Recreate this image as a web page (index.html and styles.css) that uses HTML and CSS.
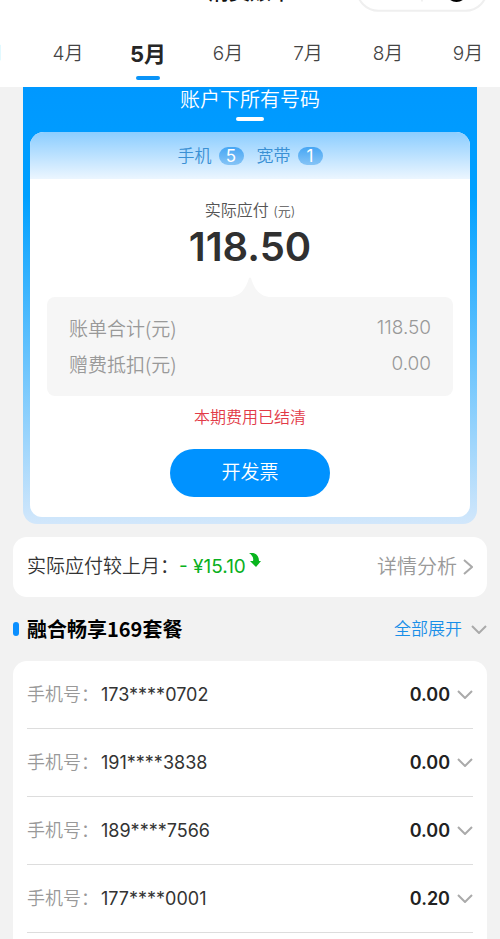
FILE: index.html
```html
<!DOCTYPE html>
<html lang="zh-CN">
<head>
<meta charset="utf-8">
<meta name="viewport" content="width=device-width, initial-scale=1">
<title>消费账单</title>
<link rel="stylesheet" href="styles.css">
</head>
<body>
<header class="top">
  <div class="titlebar">
    <h1 class="page-title">消费账单</h1>
    <div class="capsule">
      <svg viewBox="0 0 130 44" aria-hidden="true">
        <rect x="1" y="1" width="128" height="42" rx="21" fill="#fff" stroke="#efefef" stroke-width="2"/>
        <path d="M65 12V34" stroke="#e2e2e2" stroke-width="1"/>
        <circle cx="99" cy="24" r="9" fill="none" stroke="#000" stroke-width="3"/>
        <circle cx="99" cy="24" r="4" fill="#000"/>
      </svg>
    </div>
  </div>
  <nav class="months">
    <a href="#m3">3月</a>
    <a href="#m4">4月</a>
    <a href="#m5" class="active">5月</a>
    <a href="#m6">6月</a>
    <a href="#m7">7月</a>
    <a href="#m8">8月</a>
    <a href="#m9">9月</a>
  </nav>
</header>
<main>
  <section class="account">
    <h2 class="account-tab">账户下所有号码</h2>
    <div class="bill">
      <div class="counts">
        <span>手机</span><span class="count">5</span>
        <span>宽带</span><span class="count">1</span>
      </div>
      <p class="due-label">实际应付 <small>(元)</small></p>
      <p class="due">118.50</p>
      <svg class="peak" viewBox="0 0 44 20" aria-hidden="true"><path d="M0 20C12 20 18 12 21 1Q22 0 23 1C26 12 32 20 44 20Z" fill="#f6f6f6"/></svg>
      <dl class="summary">
        <div><dt>账单合计(元)</dt><dd>118.50</dd></div>
        <div><dt>赠费抵扣(元)</dt><dd>0.00</dd></div>
      </dl>
      <p class="settled">本期费用已结清</p>
      <button class="invoice" type="button">开发票</button>
    </div>
  </section>
  <section class="compare">
    <span class="compare-label">实际应付较上月：</span>
    <span class="delta">- ¥15.10</span>
    <svg class="drop" viewBox="0 0 12 14" aria-hidden="true"><path d="M0 0C6 -1 10 2 10 8H12L7 14L1 8H4C5 5 3 2 0 0Z" fill="#09b51e"/></svg>
    <a class="detail" href="#analysis">详情分析
      <svg class="right" viewBox="0 0 10 16" aria-hidden="true"><path d="M1 1L9 8L1 15"/></svg>
    </a>
  </section>
  <section>
    <div class="plan">
      <h2>融合畅享169套餐</h2>
      <button type="button">全部展开 <svg class="down" viewBox="0 0 16 9" aria-hidden="true"><path d="M1 1L8 8L15 1"/></svg></button>
    </div>
    <ul class="numbers">
      <li><span class="key">手机号：</span><span>173****0702</span><button type="button" aria-label="展开">0.00 <svg class="down" viewBox="0 0 16 9"><path d="M1 1L8 8L15 1"/></svg></button></li>
      <li><span class="key">手机号：</span><span>191****3838</span><button type="button" aria-label="展开">0.00 <svg class="down" viewBox="0 0 16 9"><path d="M1 1L8 8L15 1"/></svg></button></li>
      <li><span class="key">手机号：</span><span>189****7566</span><button type="button" aria-label="展开">0.00 <svg class="down" viewBox="0 0 16 9"><path d="M1 1L8 8L15 1"/></svg></button></li>
      <li><span class="key">手机号：</span><span>177****0001</span><button type="button" aria-label="展开">0.20 <svg class="down" viewBox="0 0 16 9"><path d="M1 1L8 8L15 1"/></svg></button></li>
    </ul>
  </section>
</main>
</body>
</html>
```
FILE: styles.css
```css
* { box-sizing: border-box; }
html { background: #f2f2f2; }
body {
  margin: 0;
  height: 100vh;
  overflow: hidden;
  color: #333;
  font: 350 19px/28px Inter, "Noto Sans CJK SC", sans-serif;
}
h1, h2, p, dl, dd, ul { margin: 0; padding: 0; font-weight: inherit; }
button { border: 0; padding: 0; background: none; font: inherit; color: inherit; }
a { color: inherit; text-decoration: none; }
svg { display: block; flex: none; }

.top { background: #fff; overflow: hidden; }
.titlebar {
  display: flex;
  align-items: flex-end;
  justify-content: center;
  height: 12px;
  position: relative;
}
.page-title { font-size: 21px; line-height: 28px; padding-bottom: 6px; font-weight: 500; color: #111; }
.capsule { position: absolute; right: 12px; bottom: 0; width: 132px; }
.months { display: flex; height: 75px; margin: 0 -8px 0 -52px; }
.months a { flex: 1; padding-top: 28px; text-align: center; color: #444; }
.months .active {
  color: #262626;
  font-size: 22px;
  font-weight: 700;
}
.months .active::after {
  content: "";
  display: block;
  width: 24px;
  height: 4px;
  margin: 8px auto 0;
  border-radius: 2px;
  background: #0a94f8;
}

main { padding: 0 13px; }
.account {
  margin: 0 10px 13px;
  padding: 0 7px 7px;
  border-radius: 0 0 14px 14px;
  background: linear-gradient(#0098ff 0%, #00a0ff 25%, #d2e7fb 100%);
}
.account-tab {
  height: 45px;
  padding-top: 1px;
  text-align: center;
  font-size: 20px;
  line-height: 24px;
  color: #fff;
}
.account-tab::after {
  content: "";
  display: block;
  width: 28px;
  height: 4px;
  margin: 5px auto 0;
  border-radius: 2px;
  background: #fff;
}
.bill {
  padding-bottom: 20px;
  border-radius: 14px 14px 12px 12px;
  background: #fff;
  overflow: hidden;
}
.counts {
  display: flex;
  align-items: center;
  justify-content: center;
  gap: 7px;
  height: 47px;
  font-size: 17px;
  color: #3a90d4;
  background: linear-gradient(#8bcdff, #ecf6ff);
}
.count {
  width: 25px;
  height: 18px;
  border-radius: 9px;
  background: linear-gradient(#46a6f4, #86c4f6);
  color: #fff;
  font-weight: 400;
  line-height: 18px;
  text-align: center;
}
.count + span { margin-left: 6px; }
.due-label { margin-top: 19px; text-align: center; font-size: 16px; line-height: 24px; color: #555; }
.due-label small { font-size: 13px; }
.due { text-align: center; font-size: 40px; line-height: 48px; font-weight: 600; color: #303030; }
.peak { width: 44px; height: 20px; margin: 6px auto 0; }
.summary {
  margin: 0 17px;
  padding: 13px 22px 14px;
  border-radius: 8px;
  background: #f6f6f6;
  color: #999;
}
.summary div { display: flex; justify-content: space-between; line-height: 36px; }
.summary dt { font-family: "Noto Sans CJK SC", sans-serif; }
.settled { margin-top: 7px; text-align: center; font-size: 16px; color: #e23a47; }
.invoice {
  display: block;
  width: 160px;
  height: 48px;
  margin: 18px auto 0;
  border-radius: 24px;
  background: #0092ff;
  color: #fff;
}

.compare {
  display: flex;
  align-items: center;
  height: 60px;
  padding: 0 14px;
  border-radius: 14px;
  background: #fff;
}
.delta { color: #09b020; font-weight: 400; }
.drop { width: 12px; height: 14px; margin: 0 0 14px 3px; }
.detail { display: flex; align-items: center; gap: 6px; margin-left: auto; font-size: 20px; color: #999; }
.right { width: 10px; height: 16px; }
.right path, .down path { fill: none; stroke: #aaa; stroke-width: 2; }
.down { width: 16px; height: 9px; }

.plan { display: flex; align-items: center; height: 64px; }
.plan h2 { display: flex; align-items: center; gap: 8px; font-family: "Noto Sans CJK SC", sans-serif; font-size: 20px; font-weight: 700; color: #000; }
.plan h2::before { content: ""; width: 6px; height: 14px; border-radius: 3px; background: #0a8fff; }
.plan button { display: flex; align-items: center; gap: 9px; margin-left: auto; font-size: 17px; color: #1a8fe8; }
.numbers { list-style: none; padding: 0 14px 28px; border-radius: 14px; background: #fff; font-size: 18px; font-weight: 400; }
.numbers li { display: flex; align-items: center; gap: 2px; height: 68px; border-bottom: 1px solid #ddd; }
.numbers .key { color: #999; font-weight: 350; }
.numbers button { display: flex; align-items: center; gap: 7px; margin-left: auto; font-weight: 600; color: #222; }
```
